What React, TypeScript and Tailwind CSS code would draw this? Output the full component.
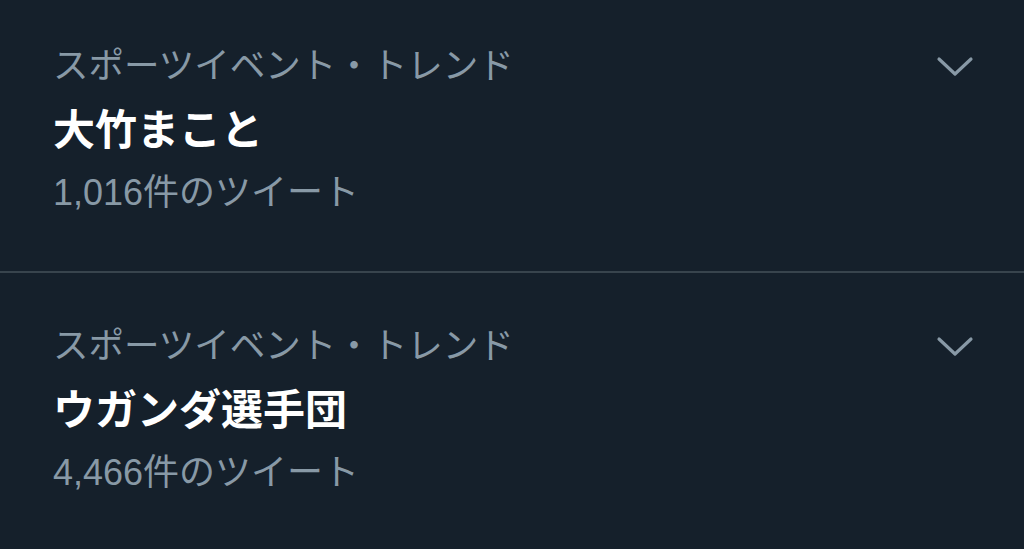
import React from "react";

const trends = [
  { category: "スポーツイベント・トレンド", title: "大竹まこと", count: "1,016件のツイート" },
  { category: "スポーツイベント・トレンド", title: "ウガンダ選手団", count: "4,466件のツイート" },
];

function Chevron() {
  return (
    <svg width="38" height="22" viewBox="0 0 38 22" fill="none" className="shrink-0">
      <path d="M3 3 L19 18 L35 3" stroke="#8899a6" strokeWidth="3.2" strokeLinecap="round" strokeLinejoin="round" />
    </svg>
  );
}

export default function App() {
  return (
    <div
      className="w-[1024px] h-[549px] overflow-hidden bg-[#15202b]"
      style={{ fontFamily: '"Liberation Sans", "Noto Sans CJK JP", sans-serif' }}
    >
      {trends.map((t, idx) => (
        <div
          key={idx}
          className={
            idx === 0
              ? "pl-[53px] pr-[50px] pt-[35px] pb-[48px] border-b-2 border-[#38444d]"
              : "pl-[53px] pr-[50px] pt-[42px]"
          }
        >
          {/* Category + menu */}
          <div className="flex items-center justify-between h-[64px]">
            <span className="text-[35.5px] leading-none text-[#8899a6] whitespace-nowrap">{t.category}</span>
            <Chevron />
          </div>
          {/* Trend name */}
          <div className="flex items-center h-[64px]">
            <span className="text-[42px] leading-none font-bold text-white whitespace-nowrap">{t.title}</span>
          </div>
          {/* Tweet count */}
          <div className="flex items-center h-[60px]">
            <span className="text-[36px] leading-none text-[#8899a6] whitespace-nowrap">{t.count}</span>
          </div>
        </div>
      ))}
    </div>
  );
}
